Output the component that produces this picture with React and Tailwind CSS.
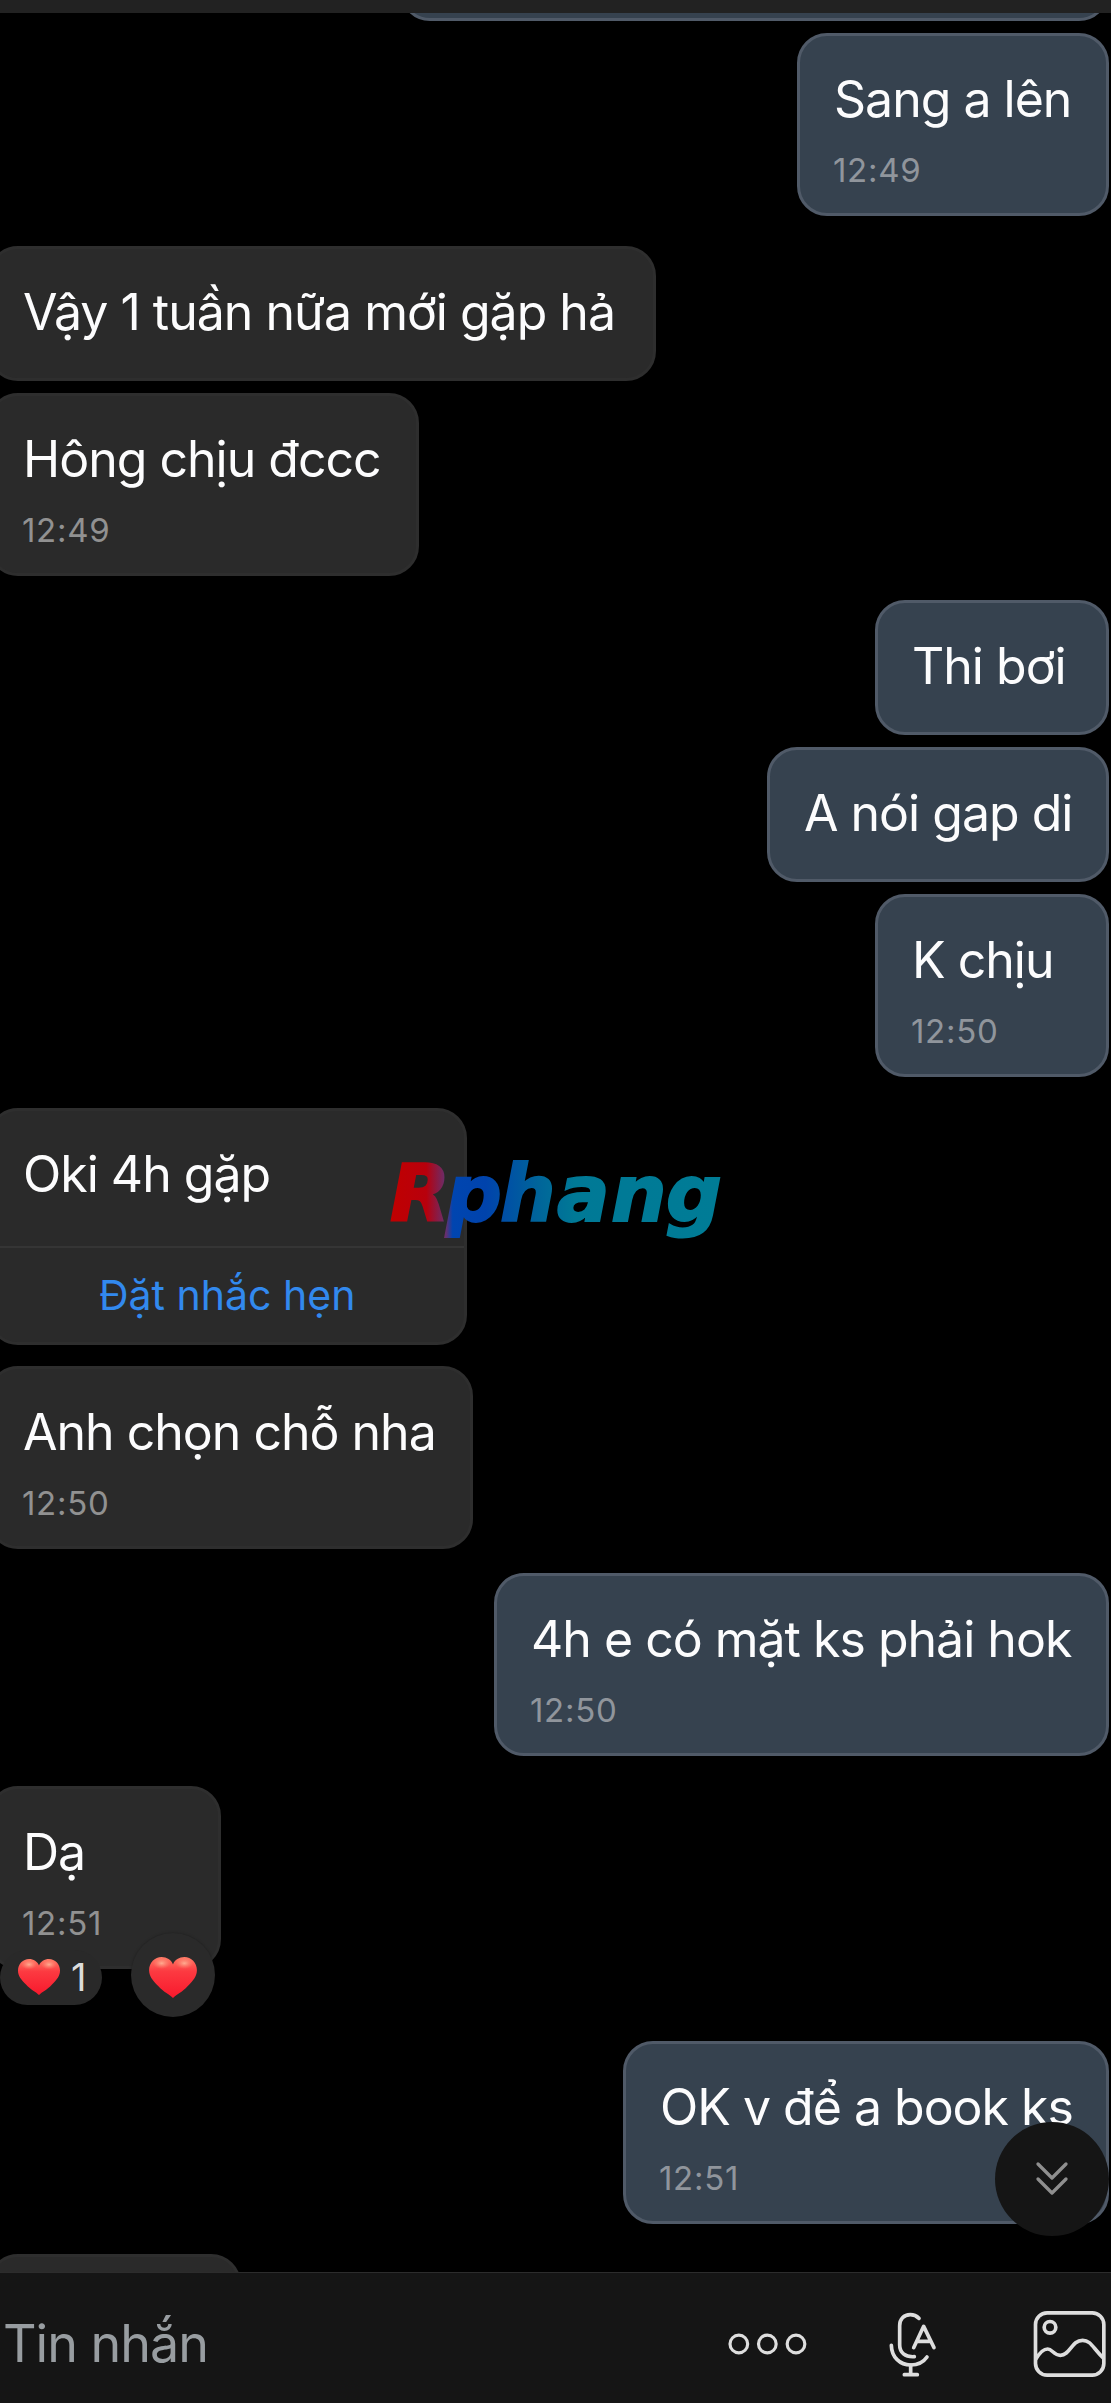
import React from 'react';
import clsx from 'clsx';

const messages = [
  { id: 1, mine: true, text: 'Sang a lên', time: '12:49', box: 'mt-3 w-[312px]' },
  { id: 2, text: 'Vậy 1 tuần nữa mới gặp hả', box: 'mt-[30px] w-[668px]' },
  { id: 3, text: 'Hông chịu đccc', time: '12:49', box: 'mt-3 w-[431px]' },
  { id: 4, mine: true, text: 'Thi bơi', box: 'mt-6 w-[234px]' },
  { id: 5, mine: true, text: 'A nói gap di', box: 'mt-3 w-[342px]' },
  { id: 6, mine: true, text: 'K chịu', time: '12:50', box: 'mt-3 w-[234px]' },
  { id: 7, text: 'Oki 4h gặp', action: 'Đặt nhắc hẹn', box: 'mt-[31px] w-[479px]' },
  { id: 8, text: 'Anh chọn chỗ nha', time: '12:50', box: 'mt-[21px] w-[485px]' },
  { id: 9, mine: true, text: '4h e có mặt ks phải hok', time: '12:50', box: 'mt-6 w-[615px]' },
  { id: 10, text: 'Dạ', time: '12:51', liked: true, box: 'mt-[30px] w-[233px]' },
  { id: 11, mine: true, text: 'OK v để a book ks', time: '12:51', box: 'mt-[72px] w-[486px]' },
  { id: 12, text: '', box: 'mt-[30px] w-[253px]' },
];

const Heart = ({ className }) => (
  <svg viewBox="0 0 42 36" className={className}>
    <defs>
      <linearGradient id="heartFill" x1="0" y1="0" x2="0" y2="1">
        <stop offset="0" stopColor="#ff7a66" />
        <stop offset="0.35" stopColor="#fc3a41" />
        <stop offset="1" stopColor="#f8182c" />
      </linearGradient>
      <radialGradient id="heartShine">
        <stop offset="0" stopColor="#ffc0a0" stopOpacity="0.8" />
        <stop offset="1" stopColor="#ff8f78" stopOpacity="0" />
      </radialGradient>
    </defs>
    <path
      d="M21 36 C18 33 13 31 8 25.500 C3 20.500 0 17 0 11.500 C0 5 5 0 11 0 C15.500 0 19.500 2.500 21 6.500 C22.500 2.500 26.500 0 31 0 C37 0 42 5 42 11.500 C42 17 39 20.500 34 25.500 C29 31 24 33 21 36 Z"
      fill="url(#heartFill)"
    />
    <ellipse cx="11" cy="5.500" rx="8" ry="5" fill="url(#heartShine)" />
    <ellipse cx="31" cy="5.500" rx="8" ry="5" fill="url(#heartShine)" />
  </svg>
);

const Reactions = () => (
  <div className="absolute left-[9px] top-[144px] flex items-center gap-[29px]">
    <div className="mt-1 flex h-[55px] w-[102px] items-center rounded-full bg-[#292929] pl-[18px]">
      <Heart className="h-9 w-[42px]" />
      <span className="ml-[11px] text-[38px] leading-none text-[#dcdcdc]">1</span>
    </div>
    <div className="flex size-[84px] items-center justify-center rounded-full bg-[#2a2a2a] shadow-[0_0_3px_rgba(0,0,0,0.3)]">
      <Heart className="mt-1 h-[41px] w-[48px]" />
    </div>
  </div>
);

const Message = ({ mine, text, time, action, liked, box }) => (
  <div
    className={clsx(
      'relative shrink-0 rounded-[30px] border-[3px] pt-[33px]',
      mine
        ? 'mr-[2px] self-end border-[#505a68] bg-[#36424f] pl-[34px]'
        : '-ml-3 self-start border-[#2e2e2e] bg-[#2a2a2a] pl-8',
      time && 'h-[183px]',
      action && 'h-[237px]',
      !time && !action && 'h-[135px]',
      box
    )}
  >
    <p className="whitespace-nowrap text-[50px] leading-[60px] tracking-[-1px] text-[#fcfcfd]">{text}</p>
    {time && (
      <p
        className={clsx(
          '-ml-px mt-[21px] text-[33px] leading-10 tracking-[0.7px]',
          mine ? 'text-[#90959c]' : 'text-[#919191]'
        )}
      >
        {time}
      </p>
    )}
    {action && (
      <div className="-ml-8 mt-[42px] border-t-2 border-[#353535] pl-[108px] pt-[22px]">
        <p className="whitespace-nowrap text-[41px] leading-[50px] text-[#3289ee]">{action}</p>
      </div>
    )}
    {liked && <Reactions />}
  </div>
);

const Watermark = () => (
  <svg viewBox="0 0 350 130" className="absolute left-[380px] top-[1140px] h-[130px] w-[350px]">
    <defs>
      <linearGradient id="brand" gradientUnits="userSpaceOnUse" x1="10" y1="0" x2="340" y2="0">
        <stop offset="0" stopColor="#c00000" />
        <stop offset="0.11" stopColor="#b8000c" />
        <stop offset="0.17" stopColor="#653070" />
        <stop offset="0.19" stopColor="#0045b0" />
        <stop offset="0.29" stopColor="#0043ac" />
        <stop offset="0.45" stopColor="#00659a" />
        <stop offset="0.56" stopColor="#007996" />
        <stop offset="1" stopColor="#007c96" />
      </linearGradient>
    </defs>
    <text
      x="10 66 120 177 231 286"
      y="81"
      fill="url(#brand)"
      stroke="url(#brand)"
      strokeWidth="2"
      className="font-['DejaVu_Sans'] text-[78px] font-bold italic"
    >
      Rphang
    </text>
  </svg>
);

const Composer = () => (
  <div className="flex h-[131px] shrink-0 border-t border-[#2c2c2c] bg-[#151515] pl-[3px] pr-1 pt-[37px]">
    <span className="flex-1 whitespace-nowrap text-[52px] leading-[68px] tracking-[-1px] text-[#989da1]">Tin nhắn</span>
    <div className="flex h-[68px] items-center text-[#dedede]">
      <svg viewBox="380 905 243 72" className="h-6 w-[81px]" fill="none" stroke="currentColor" strokeWidth="9.500">
        <circle cx="415.500" cy="941" r="26.500" />
        <circle cx="501" cy="941" r="26.500" />
        <circle cx="587" cy="941" r="26.500" />
      </svg>
      <svg
        viewBox="865 840 150 204"
        className="ml-20 h-[68px] w-[50px]"
        fill="none"
        stroke="currentColor"
        strokeWidth="11"
        strokeLinecap="round"
        strokeLinejoin="round"
      >
        <path d="M958 865 C950 857 942 854 932 854 C912 854 900 868 900 887 V945 C900 967 916 982 944 980" />
        <path d="M942 953 L972 889 L1003 953 M955 934 H990" />
        <path d="M875 946 C876 982 901 1005 933 1005 C954 1005 971 997 982 981" />
        <path d="M933 1005 V1034 M914 1034 H953" />
      </svg>
      <svg
        viewBox="1300 840 222 204"
        className="ml-[95px] h-[68px] w-[74px]"
        fill="none"
        stroke="currentColor"
        strokeWidth="11"
      >
        <rect x="1307.500" y="848.500" width="205" height="187" rx="35" />
        <circle cx="1351" cy="892" r="17.500" />
        <path d="M1308 988 C1320 968 1332 957 1344 957 C1358 957 1362 976 1382 976 C1412 976 1415 931 1449 931 C1474 931 1480 955 1512 985" />
      </svg>
    </div>
  </div>
);

const App = () => {
  return (
    <div className="relative flex h-[2403px] w-[1111px] flex-col overflow-hidden bg-black font-['Inter','Liberation_Sans',sans-serif]">
      <div className="h-[13px] shrink-0 bg-[#222222]" />
      <div className="flex min-h-0 flex-1 flex-col overflow-hidden">
        <div className="-mt-[92px] mr-[2px] h-[100px] w-[709px] shrink-0 self-end rounded-[30px] border-[3px] border-[#505a68] bg-[#36424f]" />
        {messages.map((m) => (
          <Message key={m.id} {...m} />
        ))}
      </div>
      <Composer />
      <button className="absolute left-[995px] top-[2122px] flex size-[114px] items-center justify-center rounded-full bg-[#151515]">
        <svg
          viewBox="0 0 34 36"
          className="h-9 w-[34px]"
          fill="none"
          stroke="#8f8f8f"
          strokeWidth="3.300"
          strokeLinecap="round"
          strokeLinejoin="round"
        >
          <path d="M3 3 L17 17 L31 3 M3 18 L17 32 L31 18" />
        </svg>
      </button>
      <Watermark />
    </div>
  );
};

export default App;
